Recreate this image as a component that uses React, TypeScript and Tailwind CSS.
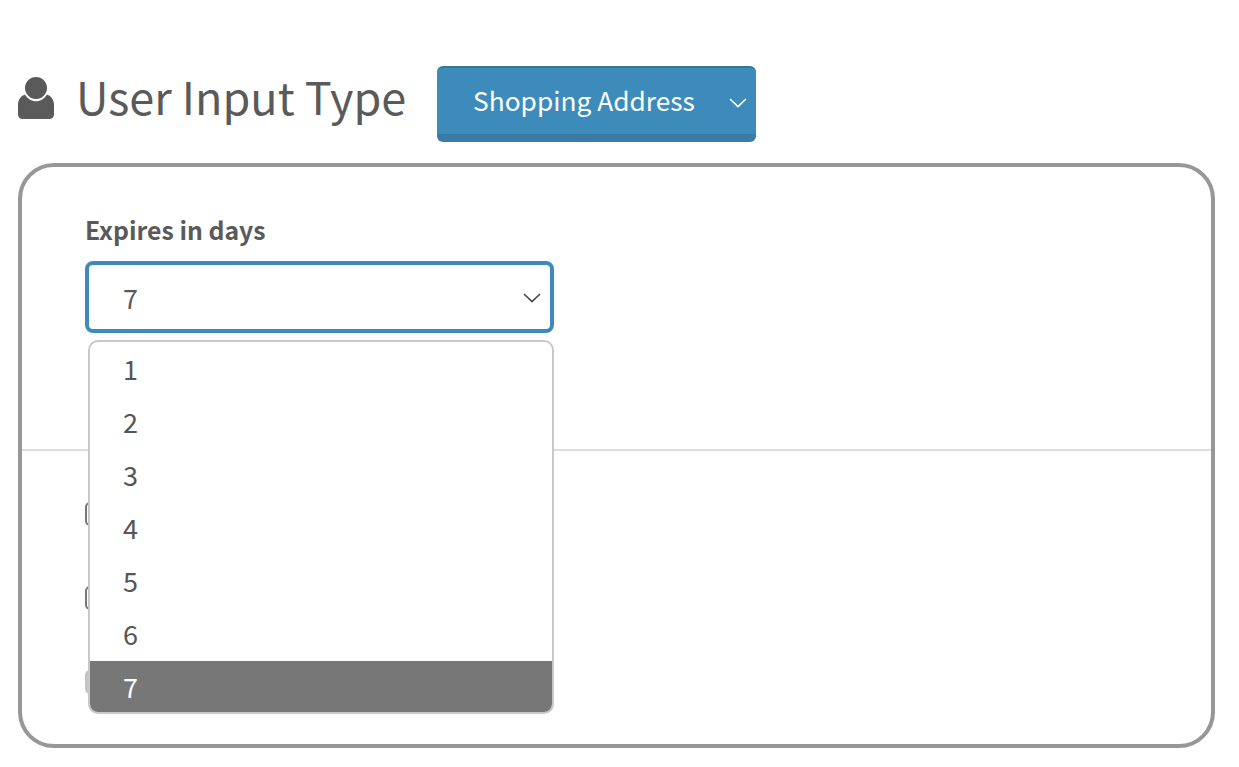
import React from "react";

const font = { fontFamily: '"Noto Sans CJK SC", "Noto Sans", sans-serif' };

function Chevron({ className }: { className: string }) {
  return (
    <svg viewBox="0 0 18 10" fill="none" stroke="currentColor" strokeWidth="1.7" className={className}>
      <path d="M1 1l8 7.5L17 1" />
    </svg>
  );
}

export default function App() {
  const options = ["1", "2", "3", "4", "5", "6", "7"];
  return (
    <div className="h-[767px] w-[1239px] overflow-hidden bg-white pl-[18px] pt-[66px] text-[#5a5a5a]" style={font}>
      <div className="flex h-[76px] items-start">
        <svg viewBox="0 0 36 43" className="mt-[11px] h-[43px] w-[36px] shrink-0" fill="#5a5a5a">
          <circle cx="18" cy="11" r="11" />
          <path d="M7 17.500C9.500 21.500 13.500 24.300 18 24.300S26.500 21.500 29 17.500C33.500 19 36 23 36 28v9.500c0 2.600-2 4.500-4.500 4.500h-27C2 42 0 40.100 0 37.500V28C0 23 2.500 19 7 17.500z" />
        </svg>
        <h1 className="ml-[22px] w-[330px] shrink-0 whitespace-nowrap pt-[7px] text-[45px] leading-none font-normal">User Input Type</h1>
        <button className="ml-[31px] flex h-[76px] w-[319px] shrink-0 items-center rounded-[6px] border-t-2 border-b-8 border-t-[#35779f] border-b-[#3a7ca5] bg-[#3d8bba] pb-[2px] pl-[36px] text-[26.3px] whitespace-nowrap text-white">
          <span>Shopping Address</span>
          <Chevron className="ml-[34px] mt-[6px] h-[10px] w-[18px] shrink-0 text-white" />
        </button>
      </div>
      <div className="relative mt-[21px] h-[585px] w-[1197px] rounded-[36px] border-4 border-[#979797]">
        <div className="pl-[63px] pt-[43px]">
          <label className="block text-[24.8px] leading-[38px] font-semibold">Expires in days</label>
          <div className="mt-[13px] flex h-[72px] w-[469px] items-center justify-between rounded-[8px] border-4 border-[#3d8bba] pl-[34px] pr-[9px] pt-[2px] text-[27px]">
            <span>7</span>
            <Chevron className="h-[10px] w-[18px] text-[#4a4a4a]" />
          </div>
          <p className="ml-[2px] mt-[33px] h-[24px] text-[20px]">Set</p>
        </div>
        <div className="mt-[59px] h-[2px] bg-[#dddddd]" />
        <div className="px-[63px] pt-[51px]">
          <div className="h-[24px] w-[24px] rounded-[5px] border-2 border-[#777777]" />
          <div className="mt-[60px] h-[24px] w-[24px] rounded-[5px] border-2 border-[#777777]" />
          <div className="mt-[60px] h-[24px] w-[24px] rounded-[5px] bg-[#c4c4c4]" />
        </div>
        <ul className="absolute left-[66px] top-[173px] h-[374px] w-[466px] overflow-hidden rounded-[10px] border-[2.5px] border-[#c8c8c8] bg-white pt-px text-[27px] text-[#555555]">
          {options.map((o) => (
            <li
              key={o}
              className={
                o === "7"
                  ? "flex h-[53px] items-center bg-[#777777] pl-[33px] text-white"
                  : "flex h-[53px] items-center pl-[33px]"
              }
            >
              {o}
            </li>
          ))}
        </ul>
      </div>
    </div>
  );
}
